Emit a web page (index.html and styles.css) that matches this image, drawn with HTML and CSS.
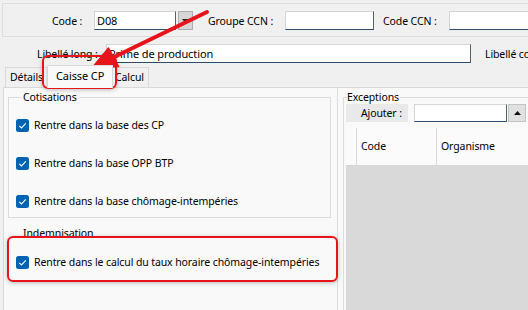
FILE: index.html
```html
<!DOCTYPE html>
<html lang="fr">
<head>
<meta charset="utf-8">
<link rel="stylesheet" href="styles.css">
</head>
<body>
<div class="app">
  <div class="topbar">
    <span class="lbl l-code">Code :</span>
    <div class="inp w-code">D08</div>
    <div class="btn-dd"><svg width="7" height="4" viewBox="0 0 7 4"><path d="M0 0h7L3.5 4z" fill="#222"/></svg></div>
    <span class="lbl l-groupe">Groupe CCN :</span>
    <div class="inp w-groupe"></div>
    <span class="lbl l-ccn">Code CCN :</span>
    <div class="inp w-ccn"></div>
  </div>
  <div class="row2">
    <span class="lbl l-libelle">Libellé long :</span>
    <div class="inp w-libelle">Prime de production</div>
    <span class="lbl l-court">Libellé court</span>
  </div>
  <div class="tabs">
    <div class="tab t-det">Détails</div>
    <div class="tab sel">Caisse CP</div>
    <div class="tab t-calc">Calcul</div>
  </div>
  <div class="page">
    <div class="left">
      <fieldset class="group cot">
        <legend>Cotisations</legend>
        <div class="chk-row"><svg class="chk" width="13" height="13" viewBox="0 0 13 13"><rect width="13" height="13" rx="2.5" fill="#0063b1"/><path d="M3.3 6.8l2.2 2.2 4.3-4.6" fill="none" stroke="#fff" stroke-width="1.1"/></svg>Rentre dans la base des CP</div>
        <div class="chk-row"><svg class="chk" width="13" height="13" viewBox="0 0 13 13"><rect width="13" height="13" rx="2.5" fill="#0063b1"/><path d="M3.3 6.8l2.2 2.2 4.3-4.6" fill="none" stroke="#fff" stroke-width="1.1"/></svg>Rentre dans la base OPP BTP</div>
        <div class="chk-row"><svg class="chk" width="13" height="13" viewBox="0 0 13 13"><rect width="13" height="13" rx="2.5" fill="#0063b1"/><path d="M3.3 6.8l2.2 2.2 4.3-4.6" fill="none" stroke="#fff" stroke-width="1.1"/></svg>Rentre dans la base chômage-intempéries</div>
      </fieldset>
      <fieldset class="group ind">
        <legend>Indemnisation</legend>
        <div class="chk-row"><svg class="chk" width="13" height="13" viewBox="0 0 13 13"><rect width="13" height="13" rx="2.5" fill="#0063b1"/><path d="M3.3 6.8l2.2 2.2 4.3-4.6" fill="none" stroke="#fff" stroke-width="1.1"/></svg>Rentre dans le calcul du taux horaire chômage-intempéries</div>
      </fieldset>
    </div>
    <div class="right">
      <fieldset class="group exc">
        <legend>Exceptions</legend>
        <div class="add-row">
          <span class="add-lbl">Ajouter :</span>
          <div class="inp w-add"></div>
          <div class="btn-up"><svg width="7" height="4" viewBox="0 0 7 4"><path d="M0 4h7L3.5 0z" fill="#111"/></svg></div>
        </div>
        <div class="grid-head">
          <div class="gc c0"></div>
          <div class="gc c1">Code</div>
          <div class="gc c2">Organisme</div>
        </div>
        <div class="grid-body"></div>
      </fieldset>
    </div>
  </div>

  <div class="hl hl-tab"></div>
  <div class="hl hl-ind"></div>
  <svg class="arrow" width="528" height="310" viewBox="0 0 528 310">
    <line x1="207" y1="12" x2="110" y2="59" stroke="#e8141b" stroke-width="4" stroke-linecap="round"/>
    <path d="M92 68 L108.5 48 L118.5 66.5 Z" fill="#e8141b" stroke="#e8141b" stroke-width="1.5" stroke-linejoin="round"/>
  </svg>
</div>
</body>
</html>
```
FILE: styles.css
```css
* { box-sizing: border-box; }
html, body { margin: 0; padding: 0; }
body {
  width: 528px;
  height: 310px;
  overflow: hidden;
  background: #f0f0f0;
  font-family: "Noto Sans", "Open Sans", sans-serif;
  font-size: 10.5px;
  letter-spacing: -0.1px;
  color: #000;
}
.app {
  position: relative;
  height: 310px;
  display: flex;
  flex-direction: column;
}
.lbl { white-space: nowrap; flex: none; }

.inp {
  flex: none;
  height: 19px;
  background: #fff;
  border: 1px solid #d4d4d4;
  border-right-color: #56606b;
  border-bottom-color: #2d4a66;
  padding: 0 2px;
  line-height: 17px;
  white-space: nowrap;
  overflow: hidden;
  font-size: 11px;
}

.topbar {
  margin: 3px 0 0 2px;
  height: 34px;
  border: 1px solid #dcdcdc;
  border-right: none;
  display: flex;
  align-items: center;
  padding-top: 1px;
}
.l-code { margin-left: 49px; width: 42px; }
.w-code { width: 82px; }
.btn-dd {
  flex: none;
  margin-left: 2px;
  width: 15px;
  height: 19px;
  background: #d6d6d6;
  border: 1px solid #adadad;
  display: flex;
  align-items: center;
  justify-content: center;
}
.l-groupe { margin-left: 15px; width: 77px; }
.w-groupe { width: 89px; }
.l-ccn { margin-left: 9px; width: 66px; }
.w-ccn { width: 100px; }

.row2 {
  margin-top: 7px;
  height: 19px;
  display: flex;
  align-items: center;
}
.l-libelle { margin-left: 37px; width: 69px; }
.w-libelle { width: 365px; }
.l-court { margin-left: 14px; }

.tabs {
  margin-top: 2px;
  height: 22px;
  display: flex;
  align-items: flex-end;
  padding-left: 5px;
}
.tab {
  height: 20px;
  line-height: 19px;
  border: 1px solid #d9d9d9;
  border-bottom: none;
  background: #f0f0f0;
  white-space: nowrap;
}
.t-det { padding: 0 4px 0 4px; width: 42px; }
.sel {
  position: relative;
  z-index: 1;
  height: 23px;
  margin-bottom: -1px;
  background: #f9f9f9;
  padding: 0 8px 0 8px;
  width: 66px;
  line-height: 20px;
  font-size: 11px;
}
.t-calc { padding: 0 4px 0 2px; border-left: none; }

.page {
  flex: 1;
  min-height: 0;
  margin-left: 3px;
  border: 1px solid #d9d9d9;
  border-right: none;
  border-bottom: none;
  background: #f9f9f9;
  display: flex;
}
.left {
  flex: none;
  width: 334px;
  border-right: 1px solid #dcdcdc;
  padding-left: 4px;
}
.group {
  margin: 0;
  padding: 0;
  border: 1px solid #dcdcdc;
  min-width: 0;
}
.group legend {
  padding: 0 2px;
  margin-left: 5px;
  line-height: 14px;
  height: 14px;
}
.cot {
  margin-top: 2px;
  width: 323px;
  padding: 13px 0 8px 7px;
  display: flex;
  flex-direction: column;
  gap: 22px;
}
.ind {
  margin-top: 8px;
  width: 323px;
  border-color: transparent;
  padding: 14px 0 0 7px;
}
.chk-row {
  height: 16px;
  display: flex;
  align-items: center;
  gap: 5px;
  white-space: nowrap;
}
.chk { flex: none; }

.right {
  flex: 1;
  min-width: 0;
  overflow: hidden;
  display: flex;
  flex-direction: column;
  padding-left: 5px;
}
.exc {
  margin-top: 2px;
  width: 220px;
  flex: 1;
  display: flex;
  flex-direction: column;
  padding: 0 0 0 2px;
  border-bottom: none;
}
.exc legend { margin-left: 1px; padding: 0; }
.add-row {
  height: 18px;
  display: flex;
}
.add-lbl {
  width: 62px;
  background: #e9e9e9;
  padding-left: 15px;
  line-height: 18px;
  white-space: nowrap;
}
.w-add {
  margin-left: 6px;
  width: 93px;
  height: 18px;
}
.btn-up {
  margin-left: 1px;
  width: 18px;
  height: 18px;
  background: #e1e1e1;
  border: 1px solid #c4c4c4;
  display: flex;
  align-items: center;
  justify-content: center;
}
.grid-head {
  margin-top: 6px;
  height: 38px;
  display: flex;
  background: #fbfbfb;
  border-bottom: 1px solid #d6d6d6;
}
.gc {
  line-height: 36px;
  padding-left: 4px;
  border-right: 1px solid #dadada;
}
.c0 { width: 11px; }
.c1 { width: 80px; }
.c2 { flex: 1; border-right: none; }
.grid-body {
  flex: 1;
  background: #d9d9d9;
}

/* Annotation overlays */
.hl {
  position: absolute;
  border: 2px solid #e8141b;
  border-radius: 6px;
  box-shadow: 0 1px 4px rgba(0, 0, 0, 0.25);
  pointer-events: none;
}
.hl-tab { left: 42px; top: 55px; width: 75px; height: 34px; }
.hl-ind { left: 7px; top: 236px; width: 331px; height: 46px; }
.arrow {
  position: absolute;
  left: 0;
  top: 0;
  pointer-events: none;
}
```
